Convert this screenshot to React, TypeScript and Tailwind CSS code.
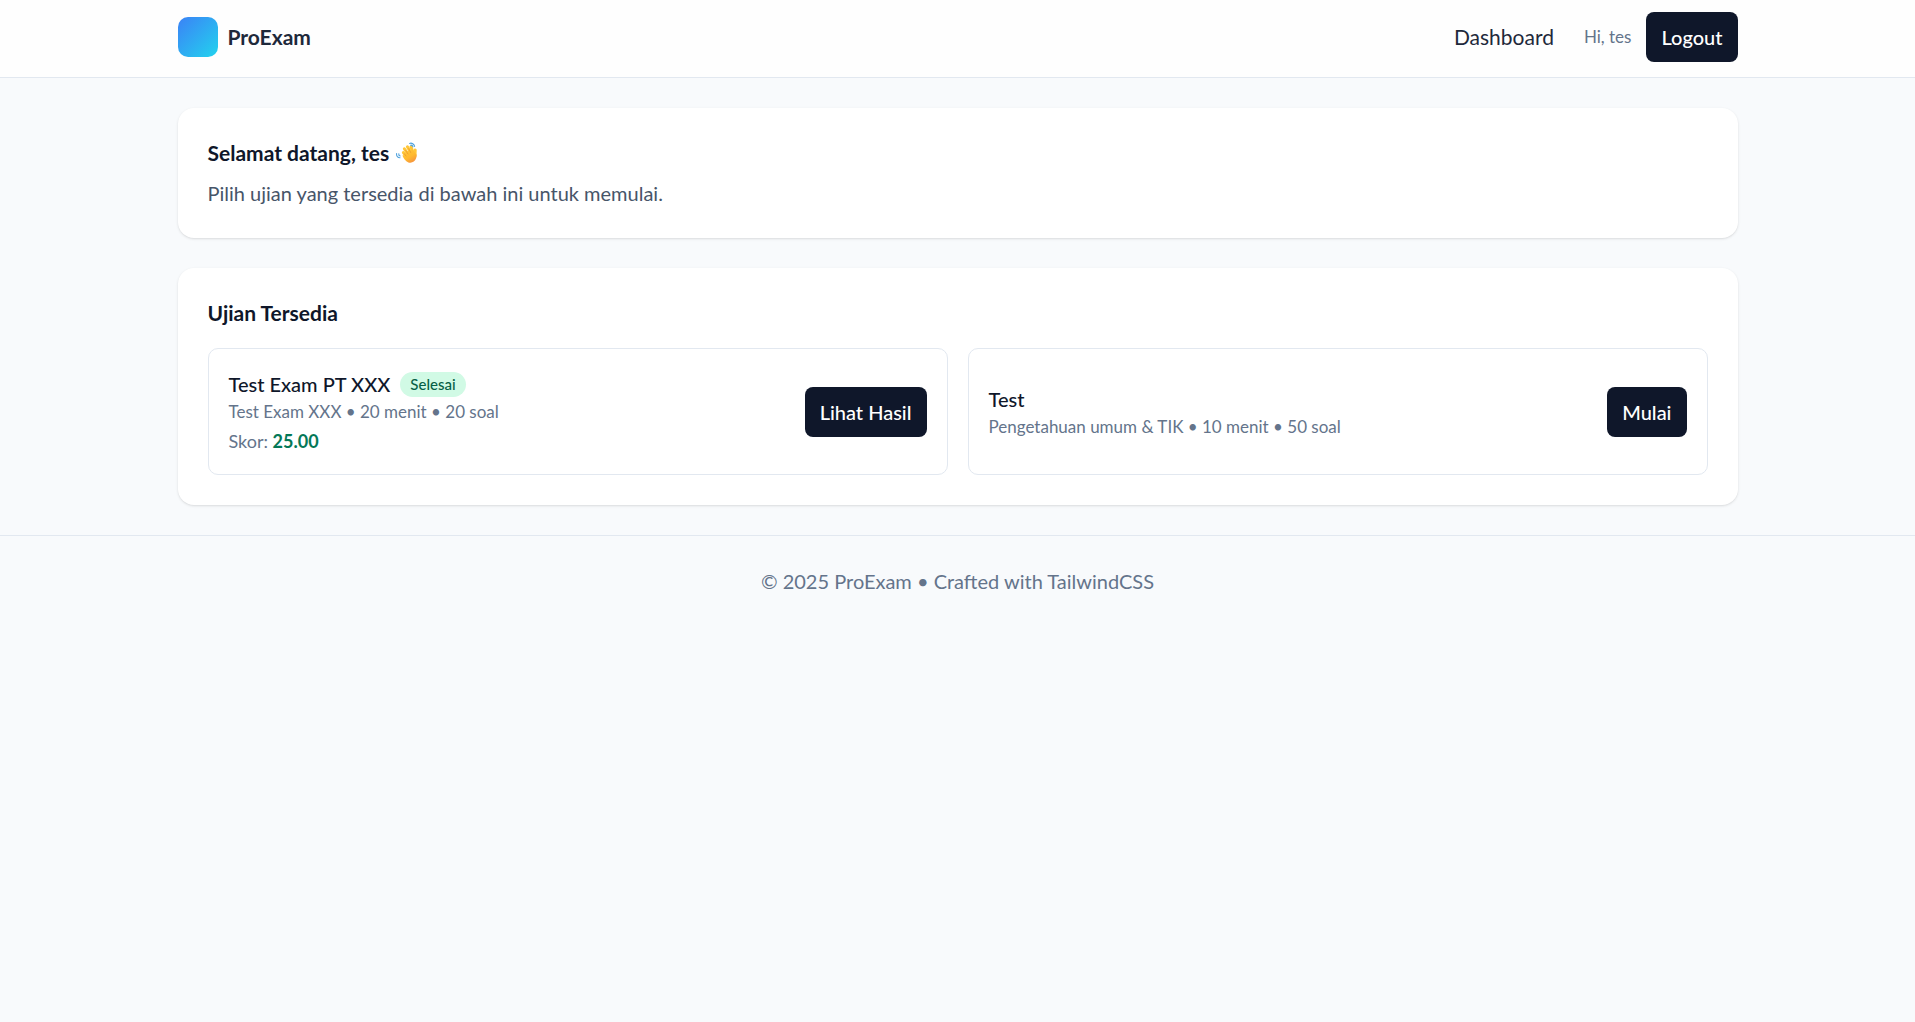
type Exam = {
    title: string;
    desc: string;
    minutes: number;
    questions: number;
    score?: string;
};

const exams: Exam[] = [
    { title: "Test Exam PT XXX", desc: "Test Exam XXX", minutes: 20, questions: 20, score: "25.00" },
    { title: "Test", desc: "Pengetahuan umum & TIK", minutes: 10, questions: 50 },
];

function Button({ children }: { children: string }) {
    return (
        <button
            type="button"
            className="shrink-0 rounded-lg bg-[#0f172a] px-[15px] py-[10px] font-medium text-white hover:bg-[#1e293b]"
        >
            {children}
        </button>
    );
}

function WavingHand() {
    return (
        <svg className="size-6" viewBox="0 0 24 24" fill="none" role="img" aria-label="👋">
            <defs>
                <linearGradient id="hand" x1="8" y1="5" x2="18" y2="22" gradientUnits="userSpaceOnUse">
                    <stop stopColor="#ffce3d" />
                    <stop offset="0.65" stopColor="#ffb92e" />
                    <stop offset="1" stopColor="#f5903f" />
                </linearGradient>
            </defs>
            {/* fingers and thumb */}
            <g stroke="#ffc637" strokeWidth="3" strokeLinecap="round">
                <path d="M8.4 11.6L11.5 16" />
                <path d="M9.4 7.8L13 13" />
                <path d="M12.4 5.8L15.5 11" />
                <path d="M16 5.8L17.5 10" />
                <path d="M20.2 9L20 15" />
            </g>
            {/* palm */}
            <path
                d="M8.6 14.2L11.2 10.4L17.8 8.4L20.2 12.2C22 12.6 21.9 15.2 21 17.6C19.8 21 16.6 22.4 13.4 21.4C10.4 20.4 8.4 17.4 7.4 14.6Z"
                fill="url(#hand)"
            />
            <path d="M10.6 9.4L13 13M13.8 7.8L15.6 11.4M9.2 12.6L11 15" stroke="#e8912c" strokeWidth="0.7" strokeLinecap="round" />
            {/* motion lines */}
            <g stroke="#4a9fdc" strokeWidth="1.1" strokeLinecap="round">
                <path d="M14.6 2.4C16.8 1.6 19.2 3 19.6 5.4" />
                <path d="M15.6 4.2C16.8 4 17.6 4.6 18 5.8" />
                <path d="M1.6 12.6C1.2 15 2.8 16.8 5 16.8" />
                <path d="M3.8 12.8C3.6 14 4.2 14.8 5.2 15" />
            </g>
        </svg>
    );
}

function Header() {
    return (
        <header className="border-b border-[#e2e8f0] bg-white/80">
            <div className="mx-auto flex max-w-[1600px] items-center justify-between px-5 pt-3 pb-[15px]">
                <a href="#" className="flex items-center gap-[10px]">
                    <span className="size-10 rounded-[10px] bg-[linear-gradient(to_bottom_right,#3b82f6,#22d3ee)]" />
                    <span className="text-[21px] font-bold">ProExam</span>
                </a>
                <nav className="flex items-center gap-[15px]">
                    <a href="#" className="px-[15px] text-[21px]">Dashboard</a>
                    <span className="text-[17px] text-[#64748b]">Hi, tes</span>
                    <Button>Logout</Button>
                </nav>
            </div>
        </header>
    );
}

function ExamCard({ exam }: { exam: Exam }) {
    return (
        <div className="flex items-center justify-between rounded-[10px] border border-[#e2e8f0] p-5">
            <div>
                <div className="flex items-center gap-[10px]">
                    <h3 className="font-medium text-[#0f172a]">{exam.title}</h3>
                    {exam.score && (
                        <span className="rounded-full bg-[#d1fae5] px-[10px] text-[15px] leading-[25px] font-medium text-[#065f46]">
                            Selesai
                        </span>
                    )}
                </div>
                <p className="text-[17px] leading-[25px] text-[#64748b]">
                    {exam.desc} • {exam.minutes} menit • {exam.questions} soal
                </p>
                {exam.score && (
                    <p className="mt-[5px] text-[18px] leading-[25px] text-[#64748b]">
                        Skor: <span className="font-bold text-[#047857]">{exam.score}</span>
                    </p>
                )}
            </div>
            <Button>{exam.score ? "Lihat Hasil" : "Mulai"}</Button>
        </div>
    );
}

export default function App() {
    return (
        <div className="min-h-screen bg-[#f8fafc] font-['Lato',sans-serif] text-[20px] leading-[30px] text-[#1e293b]">
            <Header />
            {/* ==== CONTENT ==== */}
            <main className="mx-auto flex max-w-[1600px] flex-col gap-[30px] px-5 py-[30px]">
                <section className="rounded-2xl bg-white p-[30px] shadow-sm">
                    <h1 className="flex items-center gap-[6px] text-[21px] font-bold text-[#0f172a]">
                        Selamat datang, tes <WavingHand />
                    </h1>
                    <p className="mt-[10px] text-[#475569]">Pilih ujian yang tersedia di bawah ini untuk memulai.</p>
                </section>
                <section className="rounded-2xl bg-white p-[30px] shadow-sm">
                    <h2 className="text-[21px] font-bold text-[#0f172a]">Ujian Tersedia</h2>
                    <div className="mt-5 grid grid-cols-1 gap-5 md:grid-cols-2">
                        {exams.map((exam) => (
                            <ExamCard key={exam.title} exam={exam} />
                        ))}
                    </div>
                </section>
            </main>
            {/* ==== FOOTER ==== */}
            <footer className="border-t border-[#e2e8f0] py-[30px] text-center text-[#64748b]">
                © 2025 ProExam • Crafted with TailwindCSS
            </footer>
        </div>
    );
}
